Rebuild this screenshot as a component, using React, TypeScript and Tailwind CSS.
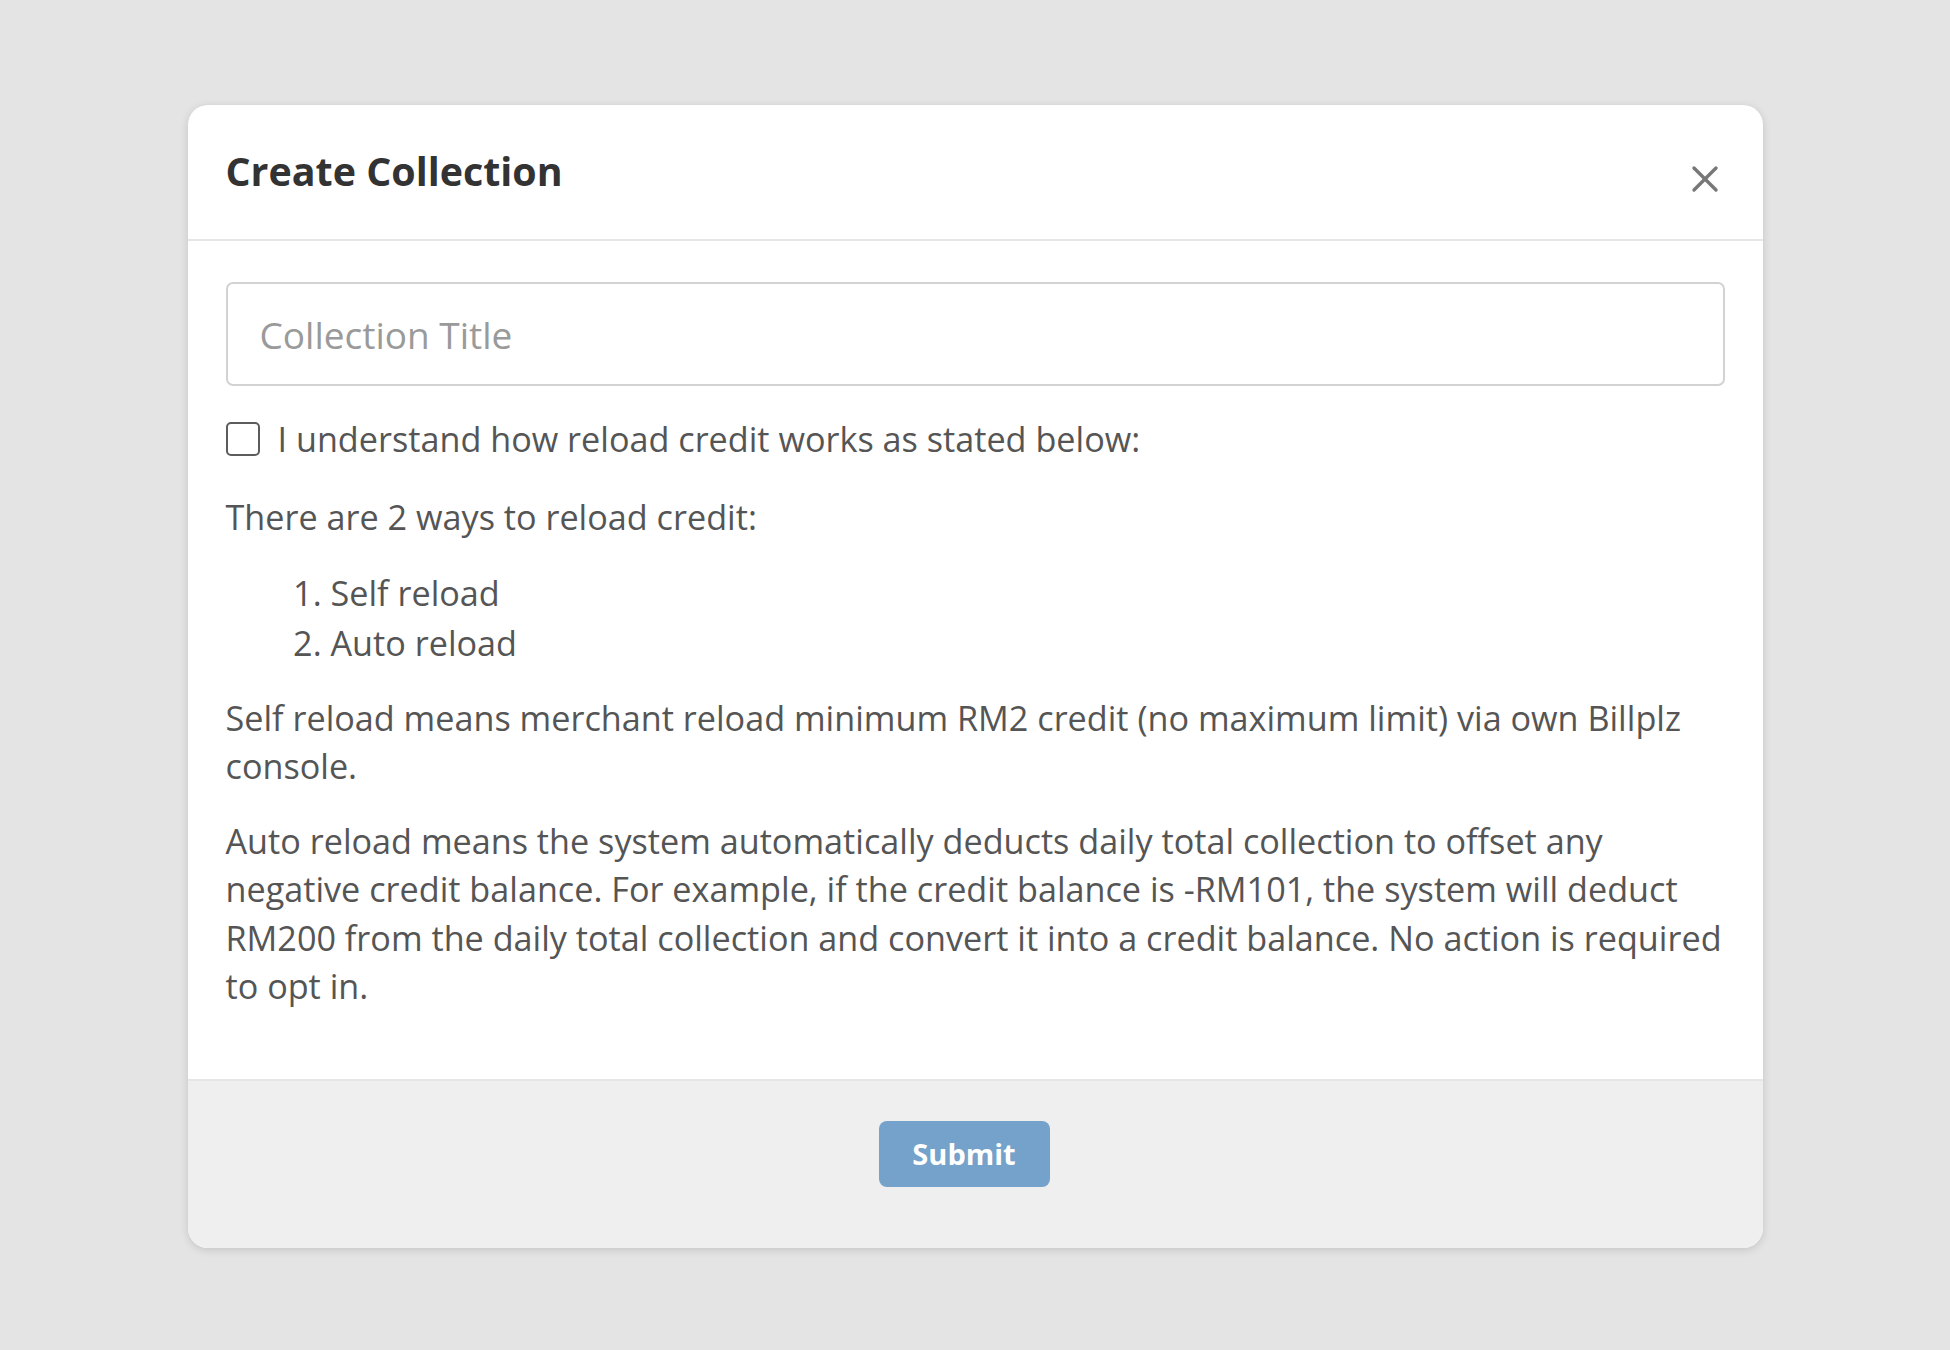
import { useState } from 'react'

function CloseIcon() {
  return (
    <svg width="28" height="28" viewBox="0 0 28 28" fill="none" stroke="#777777" strokeWidth="3.4" strokeLinecap="round">
      <line x1="3" y1="3" x2="25" y2="25" />
      <line x1="25" y1="3" x2="3" y2="25" />
    </svg>
  )
}

export default function App() {
  const [agreed, setAgreed] = useState(false)
  const [title, setTitle] = useState('')

  return (
    <div className="min-h-screen bg-[#e4e4e4] flex justify-center pt-[105px] font-['Open_Sans',_'Noto_Sans',_sans-serif]">
      <div className="w-[1575px] h-fit rounded-[20px] bg-white overflow-hidden shadow-[0_2px_8px_rgba(0,0,0,0.14)]">
        {/* Header */}
        <div className="h-[136px] pl-[38px] pr-[44px] flex items-center justify-between border-b-2 border-[#e6e6e6]">
          <h2 className="text-[39.4px] font-bold text-[#333333] leading-none">Create Collection</h2>
          <button className="mt-[14px]" aria-label="Close">
            <CloseIcon />
          </button>
        </div>

        {/* Body */}
        <div className="px-[38px] pt-[41px] pb-[68px] text-[#555555] text-[34.2px]">
          <input
            value={title}
            onChange={(e) => setTitle(e.target.value)}
            placeholder="Collection Title"
            className="w-full h-[104px] border-2 border-[#d2d2d2] rounded-[7px] px-[32px] text-[37px] text-[#555555] placeholder:text-[#9a9a9a] outline-none"
          />

          <label className="mt-[28px] flex items-center gap-[18px] leading-[49px] cursor-pointer">
            <span
              onClick={() => setAgreed(!agreed)}
              className="w-[34px] h-[34px] shrink-0 rounded-[5px] border-2 border-[#5c5c5c] bg-white flex items-center justify-center"
            >
              {agreed && <span className="w-[16px] h-[16px] bg-[#5c5c5c] rounded-[2px]" />}
            </span>
            <span>I understand how reload credit works as stated below:</span>
          </label>

          <p className="mt-[30px] leading-[48.5px]">There are 2 ways to reload credit:</p>

          <ol className="mt-[26px] list-decimal pl-[105px] leading-[50px]">
            <li>Self reload</li>
            <li>Auto reload</li>
          </ol>

          <p className="mt-[26px] leading-[48.5px]">
            Self reload means merchant reload minimum RM2 credit (no maximum limit) via own Billplz console.
          </p>

          <p className="mt-[26px] leading-[48.5px]">
            Auto reload means the system automatically deducts daily total collection to offset any negative credit
            balance. For example, if the credit balance is -RM101, the system will deduct RM200 from the daily total
            collection and convert it into a credit balance. No action is required to opt in.
          </p>
        </div>

        {/* Footer */}
        <div className="border-t-2 border-[#e6e6e6] bg-[#efefef] pt-[40px] pb-[61px] flex justify-center">
          <button className="mr-[22px] w-[171px] h-[66px] rounded-[8px] bg-[#74a2cb] text-white text-[29px] font-bold">
            Submit
          </button>
        </div>
      </div>
    </div>
  )
}
